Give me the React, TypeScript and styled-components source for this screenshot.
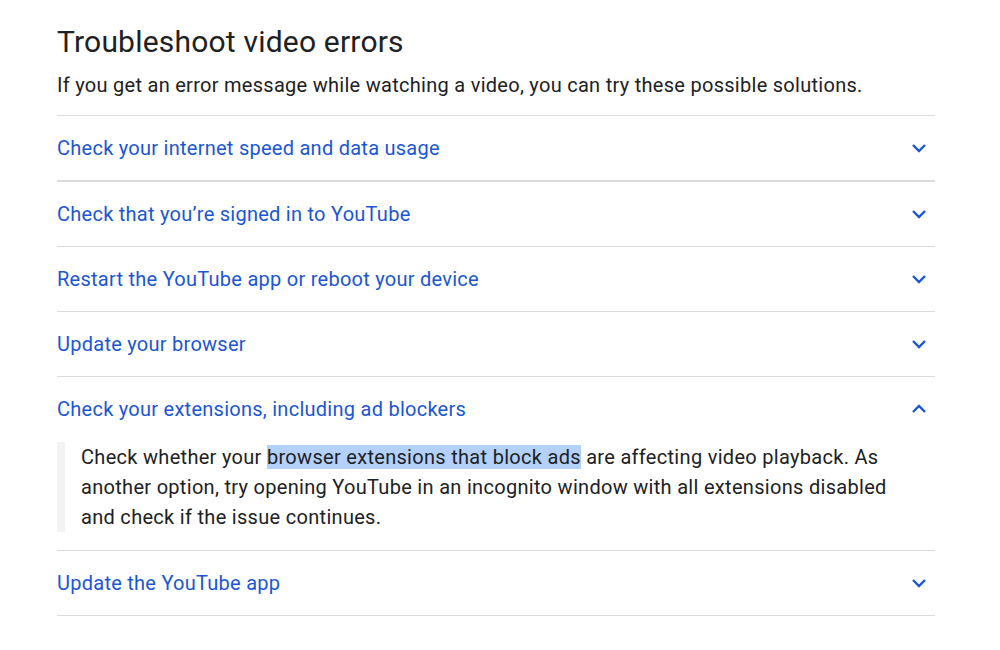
import React from 'react'
import styled, { createGlobalStyle } from 'styled-components'

const Global = createGlobalStyle`
  body {
    margin: 0;
    background: #fff;
    font-family: Roboto, "Noto Sans", Arial, sans-serif;
  }
`

const Page = styled.main`
  width: 878px;
  padding: 22px 0 0 57px;
`

const Title = styled.h1`
  margin: 0;
  font-size: 30px;
  font-weight: 400;
  line-height: 40px;
  letter-spacing: 0.2px;
  color: #202124;
`

const Intro = styled.p`
  margin: 9px 0 0;
  font-size: 20px;
  line-height: 28px;
  letter-spacing: 0.28px;
  color: #202124;
`

const List = styled.div`
  margin-top: 16px;
  border-top: 1px solid #dadce0;
`

const Item = styled.section<{ thick?: boolean }>`
  border-bottom: ${({ thick }) => (thick ? '2px' : '1px')} solid #dadce0;
`

const Header = styled.button`
  display: flex;
  width: 100%;
  height: 64px;
  align-items: center;
  justify-content: space-between;
  padding: 0 8px 0 0;
  border: 0;
  background: none;
  font-family: inherit;
  font-size: 20px;
  letter-spacing: 0.26px;
  color: #1a56d6;
  text-align: left;
  cursor: pointer;
`

const Body = styled.div`
  margin: 1px 40px 18px 0;
  padding: 0 0 0 16px;
  border-left: 8px solid #f1f3f4;
  font-size: 20px;
  line-height: 30px;
  letter-spacing: 0.3px;
  color: #202124;
`

const Mark = styled.span`
  background: #b3d1fb;
`

const Chevron = ({ up }: { up?: boolean }) => (
  <svg width="16" height="10" viewBox="0 0 16 10">
    <polyline
      points={up ? '2,8 8,2 14,8' : '2,2 8,8 14,2'}
      fill="none"
      stroke="#1a56d6"
      strokeWidth="2.4"
    />
  </svg>
)

const items = [
  'Check your internet speed and data usage',
  'Check that you’re signed in to YouTube',
  'Restart the YouTube app or reboot your device',
  'Update your browser',
  'Check your extensions, including ad blockers',
  'Update the YouTube app',
]

export default function App() {
  return (
    <Page>
      <Global />
      <Title>Troubleshoot video errors</Title>
      <Intro>If you get an error message while watching a video, you can try these possible solutions.</Intro>
      <List>
        {items.map((label, i) => {
          const open = i === 4
          return (
            <Item key={label} thick={i === 0}>
              <Header>
                {label}
                <Chevron up={open} />
              </Header>
              {open && (
                <Body>
                  Check whether your <Mark>browser extensions that block ads</Mark> are affecting video
                  playback. As another option, try opening YouTube in an incognito window with all
                  extensions disabled and check if the issue continues.
                </Body>
              )}
            </Item>
          )
        })}
      </List>
    </Page>
  )
}
